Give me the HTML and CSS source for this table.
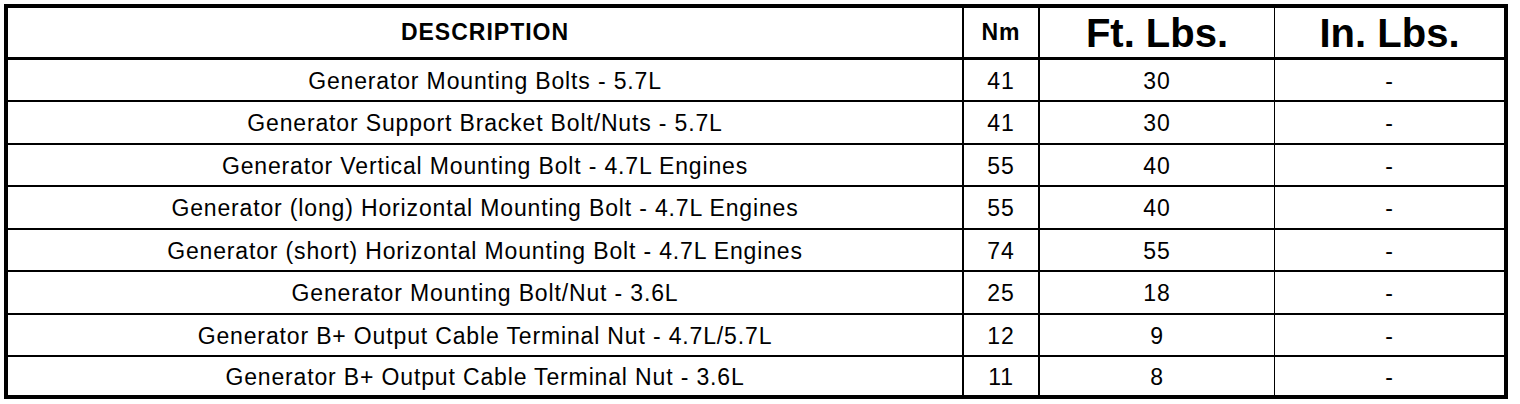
FILE: index.html
```html
<!DOCTYPE html>
<html>
<head>
<meta charset="utf-8">
<link rel="stylesheet" href="styles.css">
</head>
<body>
<table class="spec">
  <colgroup>
    <col class="c-desc">
    <col class="c-nm">
    <col class="c-ft">
    <col class="c-in">
  </colgroup>
  <thead>
    <tr>
      <th class="h-desc">DESCRIPTION</th>
      <th class="h-nm">Nm</th>
      <th class="h-big">Ft. Lbs.</th>
      <th class="h-big h-in">In. Lbs.</th>
    </tr>
  </thead>
  <tbody>
    <tr><td>Generator Mounting Bolts - 5.7L</td><td class="nm">41</td><td class="ft">30</td><td class="in">-</td></tr>
    <tr><td>Generator Support Bracket Bolt/Nuts - 5.7L</td><td class="nm">41</td><td class="ft">30</td><td class="in">-</td></tr>
    <tr><td>Generator Vertical Mounting Bolt - 4.7L Engines</td><td class="nm">55</td><td class="ft">40</td><td class="in">-</td></tr>
    <tr><td>Generator (long) Horizontal Mounting Bolt - 4.7L Engines</td><td class="nm">55</td><td class="ft">40</td><td class="in">-</td></tr>
    <tr><td>Generator (short) Horizontal Mounting Bolt - 4.7L Engines</td><td class="nm">74</td><td class="ft">55</td><td class="in">-</td></tr>
    <tr><td>Generator Mounting Bolt/Nut - 3.6L</td><td class="nm">25</td><td class="ft">18</td><td class="in">-</td></tr>
    <tr><td>Generator B+ Output Cable Terminal Nut - 4.7L/5.7L</td><td class="nm">12</td><td class="ft">9</td><td class="in">-</td></tr>
    <tr><td>Generator B+ Output Cable Terminal Nut - 3.6L</td><td class="nm">11</td><td class="ft">8</td><td class="in">-</td></tr>
  </tbody>
</table>
</body>
</html>
```

FILE: styles.css
```css
html, body {
  margin: 0;
  padding: 0;
  background: #fff;
}

body {
  padding: 4px;
  font-family: "Liberation Sans", Arial, sans-serif;
  color: #000;
}

.spec {
  width: 1504px;
  table-layout: fixed;
  border-collapse: separate;
  border-spacing: 0;
  border: 4px solid #000;
}

.c-desc { width: 954px; }
.c-nm { width: 76px; }
.c-ft { width: 236px; }
.c-in { width: 230px; }

.spec th,
.spec td {
  padding: 0;
  text-align: center;
  vertical-align: middle;
  white-space: nowrap;
  line-height: 1;
  box-sizing: border-box;
}

.spec th {
  height: 52px;
  border-bottom: 3px solid #000;
  font-weight: bold;
}

.h-desc,
.h-nm {
  font-size: 23px;
  letter-spacing: 1px;
  padding-top: 1px;
}

.h-big {
  font-size: 40px;
  padding-top: 7px;
}

.spec td {
  height: 42.5px;
  font-size: 23px;
  letter-spacing: 0.85px;
  padding-top: 3px;
}

.spec tbody tr:first-child td,
.spec tbody tr:last-child td {
  height: 40px;
}

.spec tbody tr + tr td {
  border-top: 2px solid #000;
}

.spec th:nth-child(2),
.spec th:nth-child(3),
.spec td.nm,
.spec td.ft {
  border-left: 2px solid #000;
}

.spec th.h-in,
.spec td.in {
  border-left: 1px solid #000;
}
```
